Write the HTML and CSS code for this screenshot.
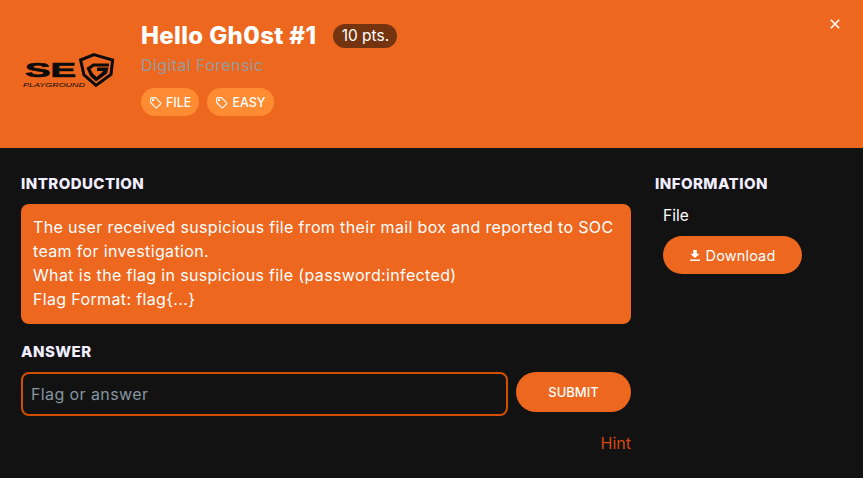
FILE: index.html
```html
<!DOCTYPE html>
<html lang="en">
<head>
<meta charset="utf-8">
<title>Hello Gh0st #1</title>
<link rel="stylesheet" href="styles.css">
</head>
<body>
<header class="hero">
  <div class="logo-cell">
    <svg class="logo" width="92" height="36" viewBox="0 0 92 36">
      <text class="logo-se" x="2" y="24" textLength="51" lengthAdjust="spacingAndGlyphs">SE</text>
      <text class="logo-pg" x="0" y="33.5" textLength="62" lengthAdjust="spacingAndGlyphs">PLAYGROUND</text>
      <path d="M71 1.6 L89.6 7 L88 21.5 L73 32.4 L61 22 L57.6 7 Z" fill="none" stroke="#0c0c0c" stroke-width="3" stroke-linejoin="miter"/>
      <path d="M86 10.5 H70 L63.5 15 L67 23 L73 28.5 L84 20.5 L85.5 14.5 H74 V18 H80 L79.5 19 L73.5 24 L69.5 20 L67.5 16 L71 13.5 H86 Z" fill="#0c0c0c"/>
    </svg>
  </div>
  <div class="hero-body">
    <div class="title-row">
      <h1 class="title">Hello Gh0st #1</h1>
      <span class="pts">10 pts.</span>
    </div>
    <div class="category">Digital Forensic</div>
    <div class="tags">
      <span class="tag">
        <svg class="tag-icon" viewBox="0 0 24 24"><path d="M3 4.5 A1.5 1.5 0 0 1 4.5 3 H12 L21.5 12.5 A1.5 1.5 0 0 1 21.5 14.5 L14.5 21.5 A1.5 1.5 0 0 1 12.5 21.5 L3 12 Z"/><circle cx="7.5" cy="7.5" r="1.2"/></svg>
        FILE
      </span>
      <span class="tag">
        <svg class="tag-icon" viewBox="0 0 24 24"><path d="M3 4.5 A1.5 1.5 0 0 1 4.5 3 H12 L21.5 12.5 A1.5 1.5 0 0 1 21.5 14.5 L14.5 21.5 A1.5 1.5 0 0 1 12.5 21.5 L3 12 Z"/><circle cx="7.5" cy="7.5" r="1.2"/></svg>
        EASY
      </span>
    </div>
  </div>
  <button class="close" aria-label="Close">
    <svg width="10" height="10" viewBox="0 0 10 10"><path d="M0.8 0.8 L9.2 9.2 M9.2 0.8 L0.8 9.2"/></svg>
  </button>
</header>
<main class="content">
  <section class="left">
    <h2 class="heading">INTRODUCTION</h2>
    <div class="intro">The user received suspicious file from their mail box and reported to SOC team for investigation.<br>What is the flag in suspicious file (password:infected)<br>Flag Format: flag{...}</div>
    <h2 class="heading answer-heading">ANSWER</h2>
    <div class="answer-row">
      <input class="answer-input" type="text" placeholder="Flag or answer">
      <button class="submit">SUBMIT</button>
    </div>
    <div class="hint-row"><span class="hint">Hint</span></div>
  </section>
  <aside class="right">
    <h2 class="heading">INFORMATION</h2>
    <div class="info-body">
      <div class="file-label">File</div>
      <button class="download">
        <svg width="10" height="11" viewBox="0 0 10 11"><path d="M3.2 0 H6.8 V3.8 H9.6 L5 8 L0.4 3.8 H3.2 Z M0 9.4 H10 V11 H0 Z"/></svg>
        Download
      </button>
    </div>
  </aside>
</main>
</body>
</html>
```
FILE: styles.css
```css
* { box-sizing: border-box; }
html, body { margin: 0; height: 100%; }
body {
  background: #121212;
  color: #fff;
  font-family: "Inter", "Noto Sans", sans-serif;
  overflow: hidden;
}
.hero {
  height: 148px;
  background: #ee671f;
  display: flex;
  position: relative;
  padding: 24px 0 0 23px;
}
.logo-cell { width: 118px; padding-top: 29px; }
.logo { display: block; }
.logo-se { font: 900 20px "Liberation Sans", sans-serif; fill: #0c0c0c; stroke: #0c0c0c; stroke-width: 0.7; }
.logo-pg { font: italic 400 5.5px "Liberation Sans", sans-serif; fill: #0c0c0c; }
.title-row { display: flex; align-items: center; height: 24px; }
.title { margin: 0; font-size: 24px; font-weight: 800; line-height: 24px; letter-spacing: 0.35px; }
.pts {
  margin-left: 17px;
  width: 64px;
  height: 24px;
  border-radius: 12px;
  background: #73340f;
  font-size: 15.5px;
  line-height: 24px;
  text-align: center;
}
.category { margin-top: 5px; font-size: 16px; line-height: 24px; color: #979b9d; letter-spacing: 0.4px; }
.tags { display: flex; gap: 8px; margin-top: 11px; }
.tag {
  display: flex;
  align-items: center;
  justify-content: center;
  gap: 4px;
  height: 28px;
  padding: 0 8px;
  border-radius: 14px;
  background: #ff8c33;
  font-size: 12.5px;
  font-weight: 500;
}
.tag-icon { width: 13px; height: 13px; fill: none; stroke: #fff; stroke-width: 2; }
.close {
  position: absolute;
  top: 19px;
  right: 23px;
  width: 10px;
  height: 10px;
  padding: 0;
  border: 0;
  background: none;
  display: block;
}
.close svg { display: block; stroke: #fff; stroke-width: 1.6; fill: none; }
.content { display: flex; padding: 25px 0 0 21px; gap: 24px; }
.left { width: 610px; }
.heading { margin: 0; font-size: 15px; font-weight: 800; line-height: 22px; color: #f3eeff; letter-spacing: 0.45px; }
.intro {
  margin-top: 9px;
  padding: 11px 12px 13px;
  height: 120px;
  background: #ee671f;
  border-radius: 8px;
  font-size: 16px;
  line-height: 24px;
  letter-spacing: 0.35px;
}
.answer-heading { margin-top: 17px; }
.answer-row { display: flex; gap: 8px; margin-top: 9px; align-items: flex-start; }
.answer-input {
  width: 487px;
  height: 44px;
  background: transparent;
  border: 2px solid #d14f00;
  border-radius: 8px;
  padding: 0 8px 1px;
  font: 400 16px "Inter", sans-serif;
  letter-spacing: 0.4px;
  color: #fff;
  outline: none;
}
.answer-input::placeholder { color: #8795a1; opacity: 1; }
.submit {
  width: 115px;
  height: 40px;
  border: 0;
  border-radius: 20px;
  background: #ee671f;
  color: #fff;
  font: 500 13px "Inter", sans-serif;
}
.hint-row { display: flex; justify-content: flex-end; margin-top: 15px; }
.hint { font-size: 16px; line-height: 24px; color: #d4480f; }
.right { width: 208px; }
.info-body { padding-left: 8px; }
.file-label { margin-top: 9px; font-size: 15.5px; line-height: 24px; }
.download {
  margin-top: 8px;
  width: 139px;
  height: 38px;
  border: 0;
  border-radius: 19px;
  background: #ee671f;
  color: #fff;
  font: 400 14.5px "Inter", sans-serif;
  letter-spacing: 0.15px;
  display: flex;
  align-items: center;
  justify-content: center;
  gap: 6px;
}
.download svg { fill: #fff; }
```
